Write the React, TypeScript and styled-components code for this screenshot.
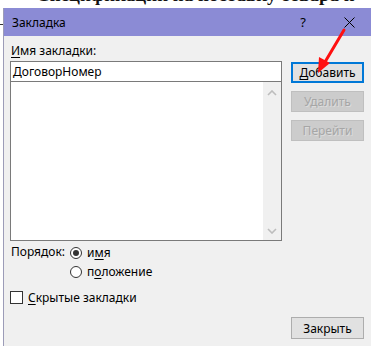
import React from "react";
import styled, { createGlobalStyle } from "styled-components";

const GlobalStyle = createGlobalStyle`
  html, body {
    margin: 0;
    padding: 0;
    background: #ffffff;
  }
  body {
    font-family: "Noto Sans", "Liberation Sans", sans-serif;
  }
`;

const Screen = styled.div`
  position: relative;
  width: 371px;
  height: 346px;
  overflow: hidden;
  background: #ffffff;
`;

const DocHeading = styled.div`
  position: absolute;
  left: 36px;
  top: -16px;
  font-family: "Liberation Serif", serif;
  font-weight: 700;
  font-size: 19px;
  color: #111;
  white-space: nowrap;
`;

const DocRule = styled.div`
  position: absolute;
  left: 0;
  top: 24px;
  width: 6px;
  border-top: 1px solid #333;
`;

const DocLines = styled.div`
  position: absolute;
  left: -8px;
  top: 60px;
  display: flex;
  flex-direction: column;
  gap: 6px;
  font-family: "Liberation Serif", serif;
  font-size: 14px;
  color: #222;
`;

const Dialog = styled.div`
  position: absolute;
  left: 3px;
  top: 8px;
  width: 376px;
  height: 360px;
  background: #f0f0f0;
  border-left: 1px solid #9c9cb8;
  display: flex;
  flex-direction: column;
  font-size: 12px;
  color: #000;
`;

const TitleBar = styled.div`
  height: 28px;
  background: #8b8bd5;
  display: flex;
  align-items: center;
  padding: 0 8px 0 8px;
  flex-shrink: 0;
`;

const Title = styled.div`
  flex: 1;
  font-size: 12px;
  color: #000;
`;

const TitleButton = styled.div`
  width: 46px;
  height: 28px;
  display: flex;
  align-items: center;
  justify-content: center;
  font-size: 13px;
  color: #000;
`;

const Body = styled.div`
  padding: 7px 11px 0 6px;
  display: flex;
  flex-direction: column;
`;

const Label = styled.div`
  height: 16px;
  line-height: 16px;
  margin-left: 1px;
  margin-bottom: 2px;
`;

const MainRow = styled.div`
  display: flex;
  gap: 9px;
`;

const LeftCol = styled.div`
  width: 272px;
  display: flex;
  flex-direction: column;
`;

const NameInput = styled.div`
  height: 21px;
  box-sizing: border-box;
  border: 1px solid #7a7a7a;
  background: #fff;
  padding-left: 2px;
  line-height: 19px;
`;

const ListBox = styled.div`
  margin-top: -1px;
  height: 160px;
  box-sizing: border-box;
  border: 1px solid #7a7a7a;
  display: flex;
`;

const ListArea = styled.div`
  flex: 1;
  background: #fff;
`;

const ScrollBar = styled.div`
  width: 18px;
  background: #f0f0f0;
  display: flex;
  flex-direction: column;
  justify-content: space-between;
  align-items: center;
  padding: 8px 0 6px;
`;

const RightCol = styled.div`
  width: 73px;
  padding-top: 1px;
  display: flex;
  flex-direction: column;
  gap: 8px;
`;

const Button = styled.div<{ $default?: boolean; $disabled?: boolean; $h?: number }>`
  height: ${(p) => p.$h ?? 21}px;
  width: 73px;
  box-sizing: border-box;
  display: flex;
  align-items: center;
  justify-content: center;
  background: ${(p) => (p.$disabled ? "#cccccc" : "#e1e1e1")};
  border: ${(p) =>
    p.$default ? "2px solid #0078d7" : p.$disabled ? "1px solid #bfbfbf" : "1px solid #adadad"};
  color: ${(p) => (p.$disabled ? "#a6a6a6" : "#000")};
  text-shadow: ${(p) => (p.$disabled ? "1px 1px 0 #dcdcdc" : "none")};
`;

const OrderRow = styled.div`
  display: flex;
  margin-top: 2px;
`;

const OrderLabel = styled.div`
  width: 59px;
  height: 19px;
  line-height: 17px;
  margin-left: 1px;
`;

const RadioGroup = styled.div`
  display: flex;
  flex-direction: column;
`;

const Option = styled.div`
  height: 19px;
  display: flex;
  align-items: center;
  gap: 5px;
`;

const Radio = styled.div<{ $checked?: boolean }>`
  width: 12px;
  height: 12px;
  box-sizing: border-box;
  border-radius: 50%;
  border: 1px solid #333;
  background: #fff;
  display: flex;
  align-items: center;
  justify-content: center;
  &::after {
    content: "";
    width: 6px;
    height: 6px;
    border-radius: 50%;
    background: ${(p) => (p.$checked ? "#333" : "transparent")};
  }
`;

const CheckRow = styled(Option)`
  height: 20px;
  margin-top: 6px;
`;

const CheckBox = styled.div`
  width: 13px;
  height: 13px;
  box-sizing: border-box;
  border: 1px solid #333;
  background: #fff;
`;

const BottomBar = styled.div`
  width: 354px;
  margin-top: 10px;
  display: flex;
  justify-content: flex-end;
`;

const Key = styled.span`
  text-decoration: underline;
  text-underline-offset: 2px;
`;

const Pointer = styled.svg`
  position: absolute;
  left: 310px;
  top: 26px;
`;

function Chevron({ down }: { down?: boolean }) {
  return (
    <svg width="10" height="6" viewBox="0 0 10 6">
      <polyline
        points={down ? "1,1 5,5 9,1" : "1,5 5,1 9,5"}
        fill="none"
        stroke="#bdbdbd"
        strokeWidth="1.6"
      />
    </svg>
  );
}

export default function App() {
  return (
    <Screen>
      <GlobalStyle />
      <DocHeading>Спецификации на поставку товара и</DocHeading>
      <DocRule />
      <DocLines>
        <span>и</span>
        <span>.</span>
        <span>в</span>
        <span>д</span>
        <span>о</span>
        <span>о</span>
        <span>с</span>
        <span>о</span>
        <span>о</span>
        <span>с</span>
        <span>:</span>
      </DocLines>
      <Dialog>
        <TitleBar>
          <Title>Закладка</Title>
          <TitleButton>?</TitleButton>
          <TitleButton>
            <svg width="11" height="11" viewBox="0 0 11 11">
              <path d="M0.5 0.5 L10.5 10.5 M10.5 0.5 L0.5 10.5" stroke="#000" strokeWidth="1" />
            </svg>
          </TitleButton>
        </TitleBar>
        <Body>
          <Label>
            <Key>И</Key>мя закладки:
          </Label>
          <MainRow>
            <LeftCol>
              <NameInput>ДоговорНомер</NameInput>
              <ListBox>
                <ListArea />
                <ScrollBar>
                  <Chevron />
                  <Chevron down />
                </ScrollBar>
              </ListBox>
            </LeftCol>
            <RightCol>
              <Button $default>
                <Key>Д</Key>обавить
              </Button>
              <Button $disabled>Удалить</Button>
              <Button $disabled>Перейти</Button>
            </RightCol>
          </MainRow>
          <OrderRow>
            <OrderLabel>Порядок:</OrderLabel>
            <RadioGroup>
              <Option>
                <Radio $checked />
                <span>
                  и<Key>м</Key>я
                </span>
              </Option>
              <Option>
                <Radio />
                <span>
                  п<Key>о</Key>ложение
                </span>
              </Option>
            </RadioGroup>
          </OrderRow>
          <CheckRow>
            <CheckBox />
            <span>
              <Key>С</Key>крытые закладки
            </span>
          </CheckRow>
          <BottomBar>
            <Button $h={22}>Закрыть</Button>
          </BottomBar>
        </Body>
      </Dialog>
      <Pointer width="40" height="52" viewBox="0 0 40 52">
        <line x1="34" y1="4" x2="15" y2="36" stroke="#ff1010" strokeWidth="3" strokeLinecap="round" />
        <polygon points="8,47 9,31 20,37" fill="#ff1010" />
      </Pointer>
    </Screen>
  );
}
